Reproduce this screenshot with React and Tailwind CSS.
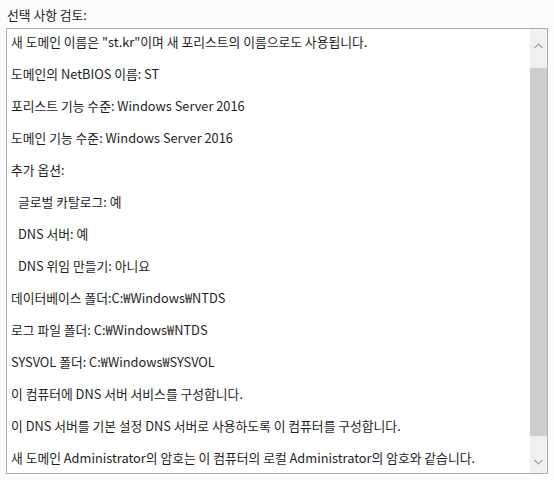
export default function App() {
  const lines = [
    { t: '새 도메인 이름은 "st.kr"이며 새 포리스트의 이름으로도 사용됩니다.' },
    { t: '도메인의 NetBIOS 이름: ST' },
    { t: '포리스트 기능 수준: Windows Server 2016' },
    { t: '도메인 기능 수준: Windows Server 2016' },
    { t: '추가 옵션:' },
    { t: '글로벌 카탈로그: 예', indent: true },
    { t: 'DNS 서버: 예', indent: true },
    { t: 'DNS 위임 만들기: 아니요', indent: true },
    { t: '데이터베이스 폴더:C:₩Windows₩NTDS' },
    { t: '로그 파일 폴더: C:₩Windows₩NTDS' },
    { t: 'SYSVOL 폴더: C:₩Windows₩SYSVOL' },
    { t: '이 컴퓨터에 DNS 서버 서비스를 구성합니다.' },
    { t: '이 DNS 서버를 기본 설정 DNS 서버로 사용하도록 이 컴퓨터를 구성합니다.' },
    { t: '새 도메인 Administrator의 암호는 이 컴퓨터의 로컬 Administrator의 암호와 같습니다.' },
  ]

  return (
    <div
      className="w-[554px] h-[480px] bg-[#fcfcfc] text-[#1e1e1e] text-[12.8px] overflow-hidden"
      style={{ fontFamily: '"Noto Sans CJK KR", "Noto Sans", sans-serif' }}
    >
      <div className="pl-[7px] pt-[6px] h-[28px] leading-[18px]">선택 사항 검토:</div>
      <div className="ml-[6px] w-[542px] h-[446px] border border-[#adadad] bg-white flex">
        <div className="flex-1 pl-[4px] pt-[5px] flex flex-col gap-[16px]">
          {lines.map((l, i) => (
            <div key={i} className={`h-[16px] leading-[16px] whitespace-nowrap ${l.indent ? 'pl-[7px]' : ''}`}>
              {l.t}
            </div>
          ))}
        </div>
        <div className="w-[17px] h-full bg-[#f0f0f0] flex flex-col">
          <div className="h-[39px] flex items-center justify-center">
            <svg width="9" height="6" viewBox="0 0 9 6" className="mt-[-6px]">
              <path d="M0.5 5 L4.5 1 L8.5 5" fill="none" stroke="#a3a3a3" strokeWidth="1.2" />
            </svg>
          </div>
          <div className="h-[368px] bg-[#cdcdcd]" />
          <div className="flex-1 flex items-end justify-center pb-[8px]">
            <svg width="9" height="6" viewBox="0 0 9 6">
              <path d="M0.5 1 L4.5 5 L8.5 1" fill="none" stroke="#a3a3a3" strokeWidth="1.2" />
            </svg>
          </div>
        </div>
      </div>
    </div>
  )
}
